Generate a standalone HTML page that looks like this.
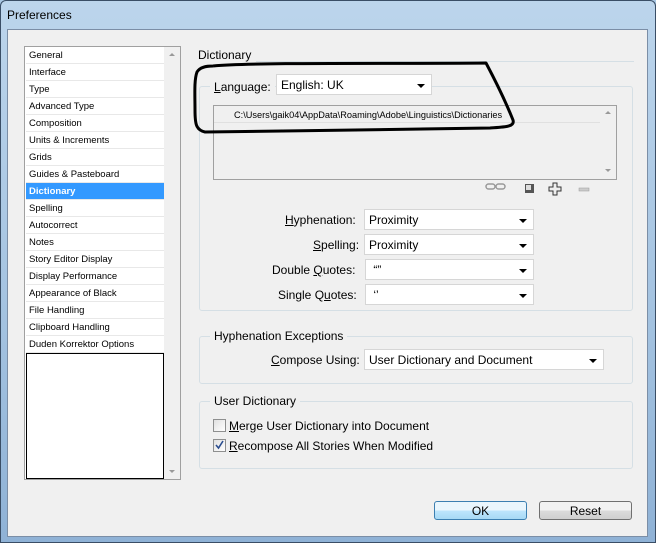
<!DOCTYPE html>
<html><head><style>
*{box-sizing:border-box;margin:0;padding:0}
body{width:656px;height:543px;overflow:hidden;font-family:"Liberation Sans",sans-serif;background:#a9c7e3;position:relative}
.abs{position:absolute}
.frame{left:0;top:0;width:656px;height:543px;background:linear-gradient(#bcd5ec,#a3c2e0 60%,#8fb2d6);border:1px solid #3a4e66;border-radius:6px 6px 0 0}
.title{left:7px;top:8px;font-size:12px;color:#000}
.content{left:7px;top:29px;width:641px;height:508px;background:#f0f0f0;border:1px solid #7b8ea6}
.list{left:24px;top:46px;width:157px;height:434px;background:#fff;border:1px solid #a0a0a0}
.row{position:absolute;left:1px;width:139px;height:17px;font-size:9.5px;line-height:17px;padding-left:3px;border-bottom:1px solid #e8e8e8;color:#000}
.sel{background:#3399ff;color:#fff;font-weight:bold}
.sb{position:absolute;right:0;top:0;width:16px;height:432px;background:#f0f0f0}
.lbl{font-size:12px;color:#000;white-space:nowrap}
.sm{font-size:9.2px}
.selbox{background:#fff;border:1px solid #d6d6d6;font-size:12px;line-height:20px;padding-left:4px;height:21px}
.arr{position:absolute;right:6px;top:9px;width:0;height:0;border-left:4px solid transparent;border-right:4px solid transparent;border-top:4px solid #000}
.grp{border:1px solid #d5dfe5;border-radius:3px}
.gt{background:#f0f0f0;padding:0 4px}
.cb{width:13px;height:13px;border:1px solid #8e8f8f;background:linear-gradient(135deg,#e0e0e0,#fff)}
.btn{height:19px;border:1px solid #707070;border-radius:3px;background:linear-gradient(#f2f2f2 50%,#dcdcdc 50%,#cfcfcf);font-size:12px;text-align:center;line-height:18px}
u{text-decoration:underline}
</style></head><body>
<div class="abs frame"></div>
<div class="abs title">Preferences</div>
<div class="abs content"></div>
<div class="abs list">
<div class="row" style="top:0">General</div>
<div class="row" style="top:17px">Interface</div>
<div class="row" style="top:34px">Type</div>
<div class="row" style="top:51px">Advanced Type</div>
<div class="row" style="top:68px">Composition</div>
<div class="row" style="top:85px">Units &amp; Increments</div>
<div class="row" style="top:102px">Grids</div>
<div class="row" style="top:119px">Guides &amp; Pasteboard</div>
<div class="row sel" style="top:136px">Dictionary</div>
<div class="row" style="top:153px">Spelling</div>
<div class="row" style="top:170px">Autocorrect</div>
<div class="row" style="top:187px">Notes</div>
<div class="row" style="top:204px">Story Editor Display</div>
<div class="row" style="top:221px">Display Performance</div>
<div class="row" style="top:238px">Appearance of Black</div>
<div class="row" style="top:255px">File Handling</div>
<div class="row" style="top:272px">Clipboard Handling</div>
<div class="row" style="top:289px">Duden Korrektor Options</div>
<div style="position:absolute;left:1px;top:306px;width:138px;height:126px;border:1px solid #000"></div>
<div class="sb"><div style="position:absolute;left:5px;top:6px;border-left:3px solid transparent;border-right:3px solid transparent;border-bottom:3px solid #999"></div><div style="position:absolute;left:5px;bottom:6px;border-left:3px solid transparent;border-right:3px solid transparent;border-top:3px solid #999"></div></div>
</div>

<div class="abs lbl" style="left:198px;top:48px">Dictionary</div>
<div class="abs" style="left:256px;top:61px;width:378px;height:1px;background:#d5dfe5"></div>

<div class="abs grp" style="left:199px;top:86px;width:434px;height:225px"></div>
<div class="abs gt lbl" style="left:210px;top:79px;line-height:16px"><u>L</u>anguage:</div>
<div class="abs selbox" style="left:276px;top:74px;width:156px">English: UK<span class="arr"></span></div>
<div class="abs" style="left:213px;top:105px;width:404px;height:75px;background:#f0f0f0;border:1px solid #a0a0a0"></div>
<div class="abs" style="left:214px;top:122px;width:386px;height:1px;background:#e0e0e0"></div>
<div class="abs sm" style="left:234px;top:110px">C:\Users\gaik04\AppData\Roaming\Adobe\Linguistics\Dictionaries</div>
<div class="abs" style="left:605px;top:111px;border-left:3px solid transparent;border-right:3px solid transparent;border-bottom:3px solid #999"></div>
<div class="abs" style="left:605px;top:169px;border-left:3px solid transparent;border-right:3px solid transparent;border-top:3px solid #999"></div>
<svg class="abs" style="left:484px;top:180px" width="110" height="16"><g fill="none" stroke="#999" stroke-width="1.5"><rect x="2" y="4" width="9" height="5" rx="2.5"/><rect x="12" y="4" width="9" height="5" rx="2.5"/></g><rect x="41" y="4" width="9" height="9" fill="#555"/><rect x="42" y="5" width="5" height="5" fill="#ddd"/><path d="M69 3h4v4h4v4h-4v4h-4v-4h-4v-4h4z" fill="#eee" stroke="#333"/><rect x="95" y="8" width="10" height="3" fill="#ccc" stroke="#999" stroke-width=".5"/></svg>

<div class="abs lbl" style="left:285px;top:213px"><u>H</u>yphenation:</div>
<div class="abs selbox" style="left:364px;top:209px;width:170px">Proximity<span class="arr"></span></div>
<div class="abs lbl" style="left:313px;top:238px"><u>S</u>pelling:</div>
<div class="abs selbox" style="left:364px;top:234px;width:170px">Proximity<span class="arr"></span></div>
<div class="abs lbl" style="left:272px;top:263px">Double <u>Q</u>uotes:</div>
<div class="abs selbox" style="left:365px;top:259px;width:169px">&nbsp;“”<span class="arr"></span></div>
<div class="abs lbl" style="left:278px;top:288px">Single Q<u>u</u>otes:</div>
<div class="abs selbox" style="left:365px;top:284px;width:169px">&nbsp;‘’<span class="arr"></span></div>

<div class="abs grp" style="left:199px;top:336px;width:434px;height:48px"></div>
<div class="abs gt lbl" style="left:210px;top:328px;line-height:16px">Hyphenation Exceptions</div>
<div class="abs lbl" style="left:271px;top:353px"><u>C</u>ompose Using:</div>
<div class="abs selbox" style="left:364px;top:349px;width:240px">User Dictionary and Document<span class="arr"></span></div>

<div class="abs grp" style="left:199px;top:401px;width:434px;height:68px"></div>
<div class="abs gt lbl" style="left:210px;top:393px;line-height:16px">User Dictionary</div>
<div class="abs cb" style="left:213px;top:419px"></div>
<div class="abs lbl" style="left:229px;top:419px"><u>M</u>erge User Dictionary into Document</div>
<div class="abs cb" style="left:213px;top:439px"><svg width="11" height="11" style="position:absolute;left:0;top:0"><path d="M2 5l2.5 3L9 1" fill="none" stroke="#2a4d8f" stroke-width="1.6"/></svg></div>
<div class="abs lbl" style="left:229px;top:439px"><u>R</u>ecompose All Stories When Modified</div>

<div class="abs btn" style="left:434px;top:501px;width:93px;border-color:#3c7fb1;background:linear-gradient(#eaf6fd 50%,#bee6fd 50%,#a7d9f5)">OK</div>
<div class="abs btn" style="left:539px;top:501px;width:93px">Reset</div>

<svg class="abs" style="left:0;top:0" width="656" height="543"><path d="M213 66 C260 62 400 64 486 63 C495 80 505 100 513 120 C515 127 505 127 490 128 C400 129 300 131 205 132 C196 130 195 124 195 110 C195 95 194 80 197 72 C200 67 206 66 213 66" fill="none" stroke="#000" stroke-width="3" stroke-linejoin="round"/></svg>
</body></html>
